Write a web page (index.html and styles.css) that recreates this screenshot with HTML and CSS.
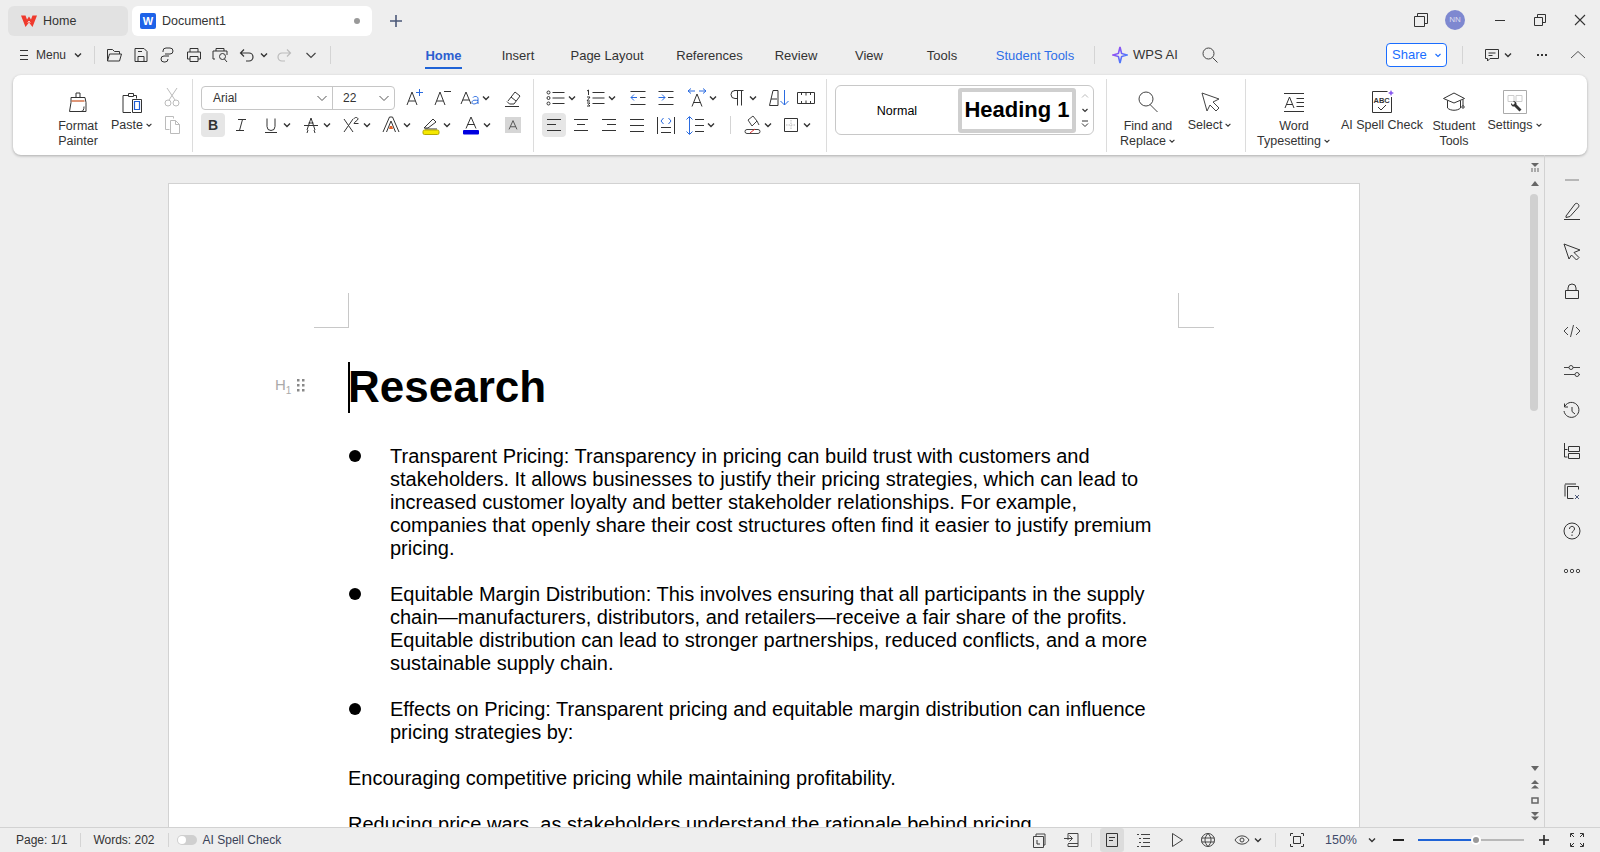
FILE: index.html
```html
<!DOCTYPE html>
<html lang="en">
<head>
<meta charset="utf-8">
<title>Document1</title>
<link rel="stylesheet" href="styles.css">
</head>
<body>
<svg class="defs" width="0" height="0" aria-hidden="true">
  <symbol id="chev" viewBox="0 0 10 10"><path d="M2 3.500 5 6.500 8 3.500" fill="none" stroke="#333" stroke-width="1.400"/></symbol>
  <symbol id="chevb" viewBox="0 0 10 10"><path d="M2.500 4 5 6.500 7.500 4" fill="none" stroke="#1a6dff" stroke-width="1.100"/></symbol>
  <symbol id="chevl" viewBox="0 0 12 12"><path d="M1.500 4 6 8.500 10.500 4" fill="none" stroke="#555" stroke-width="1"/></symbol>
</svg>
<div class="app">
  <header class="tabbar">
    <div class="tab tab-home">
      <svg class="logo" viewBox="0 0 16 14"><path d="M0 1.500h4.500l1.500 4 2-3 2 3 1.500-4H16L11.500 13 8 8.500 4.500 13z" fill="#ef3a2d"/><path d="M6.800 8.800 8 7l1.200 1.800" fill="none" stroke="#fff" stroke-width=".8"/></svg>
      <span>Home</span>
    </div>
    <div class="tab tab-doc">
      <span class="wicon">W</span>
      <span class="doc-name">Document1</span>
      <i class="dot"></i>
    </div>
    <svg class="plus" viewBox="0 0 14 14"><path d="M7 1v12M1 7h12" stroke="#4b5878" stroke-width="1.600"/></svg>
    <div class="win">
      <svg class="w1" viewBox="0 0 16 16"><path d="M1.500 4.500h10v10h-10zM4.500 4.500v-3h10v10h-3" fill="none" stroke="#333"/></svg>
      <span class="avatar">NN</span>
      <svg class="w2" viewBox="0 0 12 12"><path d="M1 6.500h10" stroke="#333"/></svg>
      <svg class="w3" viewBox="0 0 14 14"><path d="M1.500 4.500h8v8h-8zM4.500 4.500v-3h8v8h-3" fill="none" stroke="#333"/></svg>
      <svg class="w4" viewBox="0 0 12 12"><path d="M1 1l10 10M11 1 1 11" stroke="#333" stroke-width="1.100"/></svg>
    </div>
  </header>

  <nav class="toolbar">
    <div class="menu">
      <svg class="i16" viewBox="0 0 16 16"><path d="M4 3.500h8M4 8.500h8M4 12.500h8" stroke="#333"/></svg>
      <span>Menu</span>
      <svg class="ch ch-menu"><use href="#chev"/></svg>
    </div>
    <i class="vsep"></i>
    <div class="quick">
      <span class="q"><svg viewBox="0 0 18 18"><path d="M2.500 15V3.500h5l2 2h5v2.500M2.500 15l2-7h12l-2 7z" fill="none" stroke="#333"/></svg></span>
      <span class="q"><svg viewBox="0 0 18 18"><path d="M3 2.500h9l3 3v10H3zM6 15.500v-5h6v5M6 5.500h4" fill="none" stroke="#333"/></svg></span>
      <span class="q"><svg viewBox="0 0 18 18"><path d="M7 8h5a3 3 0 0 0 0-6H8a3 3 0 0 0-3 3v1M11 10H6a3 3 0 0 0 0 6h1a3 3 0 0 0 3-3" fill="none" stroke="#333"/></svg></span>
      <span class="q"><svg viewBox="0 0 18 18"><path d="M5 6V2.500h8V6M5 13H2.500V6h13v7H13M5 10.500h8v5H5z" fill="none" stroke="#333"/></svg></span>
      <span class="q"><svg viewBox="0 0 18 18"><path d="M5 5V2.500h8V5M4 13H2V5h14v4M8.500 10.500a3 3 0 1 0 6 0 3 3 0 1 0-6 0M13.500 13l2.500 3" fill="none" stroke="#333"/></svg></span>
      <span class="q q-c"><svg viewBox="0 0 18 18"><path d="M3 7h8a4 4 0 0 1 0 8H8M6 3.500 2.500 7 6 10.500" fill="none" stroke="#333" stroke-width="1.200"/></svg></span>
      <svg class="ch ch-q"><use href="#chev"/></svg>
      <span class="q"><svg viewBox="0 0 18 18"><path d="M15 7H7a4 4 0 0 0 0 8h3M12 3.500 15.500 7 12 10.500" fill="none" stroke="#bbb" stroke-width="1.200"/></svg></span>
      <span class="q"><svg class="ch-big" viewBox="0 0 12 12"><path d="M1.500 4 6 8.500 10.500 4" fill="none" stroke="#444" stroke-width="1.200"/></svg></span>
    </div>
    <i class="vsep vsep-q"></i>
    <div class="nav">
      <a class="navitem active"><span>Home</span></a>
      <a class="navitem"><span>Insert</span></a>
      <a class="navitem"><span>Page Layout</span></a>
      <a class="navitem"><span>References</span></a>
      <a class="navitem"><span>Review</span></a>
      <a class="navitem"><span>View</span></a>
      <a class="navitem"><span>Tools</span></a>
      <a class="navitem student"><span>Student Tools</span></a>
    </div>
    <i class="vsep vsep-n"></i>
    <div class="ai">
      <svg class="star" viewBox="0 0 16 18"><defs><linearGradient id="g" x1="0" y1="0" x2="1" y2="1"><stop offset="0" stop-color="#b03cf0"/><stop offset="1" stop-color="#2a8cff"/></linearGradient></defs><path d="M8 1 9.600 7.400 15 9 9.600 10.600 8 17 6.400 10.600 1 9 6.400 7.400z" fill="none" stroke="url(#g)" stroke-width="1.600"/></svg>
      <span>WPS AI</span>
    </div>
    <svg class="search" viewBox="0 0 18 18"><path d="M2 7.500a5.500 5.500 0 1 0 11 0 5.500 5.500 0 1 0-11 0M11.500 11.500 16.500 16.500" fill="none" stroke="#444"/></svg>
    <div class="rightbar">
      <div class="share"><span>Share</span><svg class="ch ch-share"><use href="#chevb"/></svg></div>
      <i class="vsep vsep-r"></i>
      <svg class="cm" viewBox="0 0 16 16"><path d="M1.500 2.500h13v9H6L3.500 14v-2.500h-2zM4.500 6h7M4.500 8.500h4" fill="none" stroke="#333"/></svg>
      <svg class="ch ch-cm"><use href="#chev"/></svg>
      <span class="dots"><i></i><i></i><i></i></span>
      <svg class="caret" viewBox="0 0 16 10"><path d="M1 8 8 1.500 15 8" fill="none" stroke="#555"/></svg>
    </div>
  </nav>

  <section class="ribbon">
    <div class="grp grp1">
      <div class="large lg-fp">
        <svg class="lgi" viewBox="0 0 24 24"><path d="M10 7V3h4v4M5 7.500h14l1 5v9H3.500l1.500-9z" fill="none" stroke="#333"/><path d="M5.500 11h13" stroke="#c8501e" stroke-width="1.200"/><path d="M15 21.500c2 0 3-2 3-5" fill="none" stroke="#333"/></svg>
        <span class="lbl">Format<br>Painter</span>
      </div>
      <div class="large lg-paste">
        <svg class="lgi" viewBox="0 0 24 24"><path d="M8.500 5.500H3v17h8M13.500 5.500h3v3M8.500 6.500V3.500h5v3z" fill="none" stroke="#333"/><path d="M12.500 9.500h9v13h-9z" fill="none" stroke="#333"/><path d="M14.500 11.500h5v8h-5z" fill="none" stroke="#1f5fd6" stroke-width="1.200"/></svg>
        <span class="lbl lbl1">Paste<svg class="ch ch-lbl"><use href="#chev"/></svg></span>
      </div>
      <div class="cutcopy">
        <svg class="b" viewBox="0 0 24 24"><path d="M7 3l8 12M17 3 9 15M5 18a3 3 0 1 0 6 0 3 3 0 1 0-6 0M13 18a3 3 0 1 0 6 0 3 3 0 1 0-6 0" fill="none" stroke="#bbb"/></svg>
        <svg class="b" viewBox="0 0 24 24"><path d="M5.500 3.500h8v2M5.500 3.500v13h4M10.500 7.500h5l4 4v9h-9zM15.500 7.500v4h4" fill="none" stroke="#bbb"/></svg>
      </div>
    </div>

    <div class="grp grp2">
      <div class="row row-top">
        <div class="fontbox"><span class="fname">Arial<svg class="chl"><use href="#chevl"/></svg></span><span class="fsize">22<svg class="chl"><use href="#chevl"/></svg></span></div>
        <svg class="b ml7" viewBox="0 0 24 24"><path d="M5 19 10 6l5 13M6.800 15h6.400" fill="none" stroke="#333"/><path d="M14 6.500h7M17.500 3v7" stroke="#2a6be0"/></svg>
        <svg class="b ml4" viewBox="0 0 24 24"><path d="M5 19 10 6l5 13M6.800 15h6.400" fill="none" stroke="#333"/><path d="M14 5.500h7" stroke="#333"/></svg>
        <span class="bc ml4"><svg class="b" viewBox="0 0 24 24"><path d="M3 18 8 6l5 12M4.700 14h6.600" fill="none" stroke="#333"/><path d="M15 11.500c1-1.500 5-1.500 5 1V18M20 14.500c-5-1-6 .5-6 2s3 2.500 6-.5" fill="none" stroke="#2a6be0"/></svg><svg class="ch"><use href="#chev"/></svg></span>
        <svg class="b ml2" viewBox="0 0 24 24"><path d="M8 15 15 6l5 4-6 8H9.500L7 15.500M5 20.500h14" fill="none" stroke="#333"/><path d="M11 11l5 4" stroke="#333"/></svg>
      </div>
      <div class="row">
        <span class="b act txt-b">B</span>
        <svg class="b ml4" viewBox="0 0 24 24"><path d="M9 6.500h8M7 17.500h8M13.500 6.500l-3 11" fill="none" stroke="#333"/></svg>
        <span class="bc ml6"><svg class="b" viewBox="0 0 24 24"><path d="M8 5.500v8a4 4 0 0 0 8 0v-8M6 19.500h12" fill="none" stroke="#333"/></svg><svg class="ch"><use href="#chev"/></svg></span>
        <span class="bc"><svg class="b" viewBox="0 0 24 24"><path d="M8 17l4-12 4 12M9.500 10h5M5 12.500h14M8 20l1-3M16 20l-1-3" fill="none" stroke="#333"/></svg><svg class="ch"><use href="#chev"/></svg></span>
        <span class="bc"><svg class="b" viewBox="0 0 24 24"><path d="M5 6l9 13M14 6 5 19" fill="none" stroke="#333"/><path d="M15 6c0-2 4-2 4 0 0 1.500-4 3-4 4.500h4.500" fill="none" stroke="#333"/></svg><svg class="ch"><use href="#chev"/></svg></span>
        <span class="bc"><svg class="b" viewBox="0 0 24 24"><path d="M4 19 10.500 4h3L20 19M7.500 19l4.500-11 4.500 11" fill="none" stroke="#333"/><path d="M10 16h4l-.8-3h-2.400z" fill="#e2622a"/></svg><svg class="ch"><use href="#chev"/></svg></span>
        <span class="bc"><svg class="b" viewBox="0 0 24 24"><path d="M5 15 14 6l3 3-8 6zM6 16h12" fill="none" stroke="#333"/><rect x="4" y="17" width="16" height="4.500" rx="1.500" fill="#f5e800" stroke="#b5a800"/></svg><svg class="ch"><use href="#chev"/></svg></span>
        <span class="bc"><svg class="b" viewBox="0 0 24 24"><path d="M7 15.500 12 4l5 11.500M8.500 11.500h7" fill="none" stroke="#333"/><rect x="4" y="17" width="16" height="4.500" rx="1" fill="#0000e0"/></svg><svg class="ch"><use href="#chev"/></svg></span>
        <span class="b ml2 shade"><svg viewBox="0 0 16 16"><path d="M3.500 13 8 3l4.500 10M5 10h6" fill="none" stroke="#444"/></svg></span>
      </div>
    </div>

    <div class="grp grp3">
      <div class="row row-top para1">
        <span class="bc"><svg class="b" viewBox="0 0 24 24"><path d="M8.500 6.500h12M8.500 12h12M8.500 17.500h12" stroke="#333"/><g fill="none" stroke="#333"><circle cx="4.500" cy="6.500" r="1.500"/><circle cx="4.500" cy="12" r="1.500"/><circle cx="4.500" cy="17.500" r="1.500"/></g></svg><svg class="ch"><use href="#chev"/></svg></span>
        <span class="bc"><svg class="b" viewBox="0 0 24 24"><path d="M8.500 6.500h12M8.500 12h12M8.500 17.500h12M3 5l1.500-1v5M3 11h3l-3 4h3M3 17h3l-1.500 1.500L6 20H3" fill="none" stroke="#333"/></svg><svg class="ch"><use href="#chev"/></svg></span>
        <svg class="b ml2" viewBox="0 0 24 24"><path d="M4.500 5.500h15M14 11.500h5.500M4.500 18.500h15" stroke="#333"/><path d="M11 11.500H5M8 8.500l-3 3 3 3" fill="none" stroke="#2a6be0"/></svg>
        <svg class="b ml4" viewBox="0 0 24 24"><path d="M4.500 5.500h15M14 11.500h5.500M4.500 18.500h15" stroke="#333"/><path d="M4.500 11.500H11M8 8.500l3 3-3 3" fill="none" stroke="#2a6be0"/></svg>
        <span class="bc ml7"><svg class="b" viewBox="0 0 24 24"><path d="M7 20.500 12 8l5 12.500M8.500 16.500h7" fill="none" stroke="#333"/><path d="M3 5h7M6 2.500 3 5l3 2.500M14 5h7M18 2.500 21 5l-3 2.500" fill="none" stroke="#2a6be0"/></svg><svg class="ch"><use href="#chev"/></svg></span>
        <span class="bc"><svg class="b" viewBox="0 0 24 24"><path d="M12.500 4.500v15M16.500 4.500v15M12.500 4.500H10a4 4 0 0 0 0 8h2.500M9 4.500h9.500" fill="none" stroke="#333"/></svg><svg class="ch"><use href="#chev"/></svg></span>
        <svg class="b ml2" viewBox="0 0 24 24"><path d="M2.500 19.500 6 4.500h5v15zM4 13h6" fill="none" stroke="#333"/><path d="M17.500 4v15M13.500 15l4 4 4-4" fill="none" stroke="#2a6be0"/></svg>
        <svg class="b ml3" viewBox="0 0 24 24"><path d="M3.500 6.500h17v11h-17zM7.500 6.500v2.500M12 6.500v3M16.500 6.500v2.500M7.500 17.500V15M12 17.500V14.500M16.500 17.500V15" fill="none" stroke="#333"/></svg>
      </div>
      <div class="row para2">
        <svg class="b act" viewBox="0 0 24 24"><path d="M5 6.500h14M5 11.500h9M5 17.500h14" stroke="#333"/></svg>
        <svg class="b ml3" viewBox="0 0 24 24"><path d="M5 6.500h14M8 11.500h8M5 17.500h14" stroke="#333"/></svg>
        <svg class="b ml4" viewBox="0 0 24 24"><path d="M5 6.500h14M10 11.500h9M5 17.500h14" stroke="#333"/></svg>
        <svg class="b ml4" viewBox="0 0 24 24"><path d="M5 6.500h14M5 12.500h14M5 18.500h14" stroke="#333"/></svg>
        <svg class="b ml5" viewBox="0 0 24 24"><path d="M3.500 4v17M20.500 4v17M7 14.500h10M7 19.500h10" stroke="#333"/><path d="M9.500 5 7 8l2.500 3M14.500 5 17 8l-2.500 3" fill="none" stroke="#2a6be0"/></svg>
        <span class="bc ml5"><svg class="b" viewBox="0 0 24 24"><path d="M12 6.500h9M12 12.500h9M12 18.500h9" stroke="#333"/><path d="M6.500 4v17M3.500 6.500l3-3 3 3M3.500 18.500l3 3 3-3" fill="none" stroke="#2a6be0"/></svg><svg class="ch"><use href="#chev"/></svg></span>
        <i class="vsep vsep-p"></i>
        <span class="bc ml9"><svg class="b" viewBox="0 0 24 24"><path d="M8 7 13 3l4 5-5 5zM17 8l2 4M5 18.500a2 2 0 0 1 2-2h11a2 2 0 0 1 0 4H7a2 2 0 0 1-2-2z" fill="none" stroke="#444"/><path d="M10 20l5-4" stroke="#e03030"/></svg><svg class="ch"><use href="#chev"/></svg></span>
        <span class="bc ml-1"><svg class="b" viewBox="0 0 24 24"><path d="M5.500 5.500h13v13h-13z" fill="none" stroke="#333"/><path d="M12 7v10M7 12h10" stroke="#bbb" stroke-dasharray="1.500 1"/></svg><svg class="ch"><use href="#chev"/></svg></span>
      </div>
    </div>

    <div class="grp grp4">
      <div class="styles">
        <span class="st-normal">Normal</span>
        <span class="st-head">Heading 1</span>
        <span class="st-arrows">
          <svg viewBox="0 0 10 10"><path d="M2 6.500 5 3.500 8 6.500" fill="none" stroke="#bbb"/></svg>
          <svg viewBox="0 0 10 10"><path d="M2.500 4 5 6.500 7.500 4" fill="none" stroke="#333" stroke-width="1.200"/></svg>
          <svg viewBox="0 0 10 10"><path d="M2 2h6M2 4.500 5 7.500 8 4.500" fill="none" stroke="#333"/></svg>
        </span>
      </div>
    </div>

    <div class="grp grp5">
      <div class="large lg-find">
        <svg class="lgi" viewBox="0 0 24 24"><path d="M3 9a7 7 0 1 0 14 0 7 7 0 1 0-14 0M14 14.500 21.500 22" fill="none" stroke="#444"/></svg>
        <span class="lbl">Find and<br>Replace<svg class="ch ch-lbl"><use href="#chev"/></svg></span>
      </div>
      <div class="large lg-sel">
        <svg class="lgi" viewBox="0 0 24 24"><path d="M4 3l17 6-6 3 6 6-3 3-6-6-3 6z" fill="none" stroke="#444"/></svg>
        <span class="lbl lbl1">Select<svg class="ch ch-lbl"><use href="#chev"/></svg></span>
      </div>
    </div>

    <div class="grp grp6">
      <div class="large lg-word">
        <svg class="lgi" viewBox="0 0 24 24"><path d="M2 3.500h20M2 21.500h20M14.500 8.500H22M14.500 12.500H22M14.500 16.500H22" stroke="#333"/><path d="M3 18 7.500 7 12 18M4.500 14.500h6" fill="none" stroke="#333"/></svg>
        <span class="lbl">Word<br>Typesetting<svg class="ch ch-lbl"><use href="#chev"/></svg></span>
      </div>
      <div class="large lg-spell">
        <svg class="lgi" viewBox="0 0 24 24"><path d="M17.500 1.500h-15v21h19V7" fill="none" stroke="#333"/><path d="M8 19l3 3 5-5" fill="none" stroke="#333" transform="translate(0 -2)"/><text x="3.500" y="13" class="abc">ABC</text><path d="M21 0l1 2 2 1-2 1-1 2-1-2-2-1 2-1z" fill="#8a5cf0"/></svg>
        <span class="lbl lbl1">AI Spell Check</span>
      </div>
      <div class="large lg-student">
        <svg class="lgi" viewBox="0 0 24 24"><path d="M12 3 1.500 8.500 12 13l10.500-4.500zM5.500 10.500V18c3 3 10 3 13 0v-7.500M21 9.500V16" fill="none" stroke="#333"/><circle cx="21" cy="17" r="1.200" fill="none" stroke="#333"/></svg>
        <span class="lbl">Student<br>Tools</span>
      </div>
      <div class="large lg-set">
        <svg class="lgi" viewBox="0 0 24 24"><path d="M.5.500h23v23H.5z" fill="none" stroke="#aaa"/><path d="M5 5.500h6v6H5zM13 5.500h6v6h-6z" fill="none" stroke="#ccc"/><path d="M8 13a3 3 0 0 0 3.500 3.500l5 5 2-2-5-5A3 3 0 0 0 10 11l2 2-2 2z" fill="#333"/></svg>
        <span class="lbl lbl1">Settings<svg class="ch ch-lbl"><use href="#chev"/></svg></span>
      </div>
    </div>
  </section>

  <main class="main">
    <div class="docarea">
      <article class="page">
        <div class="marks"><i class="mark-l"></i><i class="mark-r"></i></div>
        <div class="content">
          <h1 class="h1"><span class="gutter"><span class="h1tag">H<sub>1</sub></span><svg class="grip" viewBox="0 0 10 14"><g fill="#888"><rect x="1" y="1" width="2.500" height="2.500"/><rect x="6" y="1" width="2.500" height="2.500"/><rect x="1" y="6" width="2.500" height="2.500"/><rect x="6" y="6" width="2.500" height="2.500"/><rect x="1" y="11" width="2.500" height="2.500"/><rect x="6" y="11" width="2.500" height="2.500"/></g></svg></span><i class="cursor"></i>Research</h1>
          <ul class="list">
            <li>Transparent Pricing: Transparency in pricing can build trust with customers and stakeholders. It allows businesses to justify their pricing strategies, which can lead to increased customer loyalty and better stakeholder relationships. For example, companies that openly share their cost structures often find it easier to justify premium pricing.</li>
            <li>Equitable Margin Distribution: This involves ensuring that all participants in the supply chain—manufacturers, distributors, and retailers—receive a fair share of the profits. Equitable distribution can lead to stronger partnerships, reduced conflicts, and a more sustainable supply chain.</li>
            <li>Effects on Pricing: Transparent pricing and equitable margin distribution can influence pricing strategies by:</li>
          </ul>
          <p class="para">Encouraging competitive pricing while maintaining profitability.</p>
          <p class="para">Reducing price wars, as stakeholders understand the rationale behind pricing.</p>
        </div>
      </article>
    </div>
    <div class="vscroll">
      <div class="sb-top">
        <svg viewBox="0 0 10 10"><path d="M1 1h8L5 5z" fill="#666"/><path d="M1 7h8M1 9h8" stroke="#666" stroke-dasharray="2 1"/></svg>
        <svg viewBox="0 0 10 10"><path d="M1 8h8L5 3z" fill="#666"/></svg>
      </div>
      <div class="sb-track"><div class="sb-thumb"></div></div>
      <div class="sb-bot">
        <svg viewBox="0 0 10 10"><path d="M1 3h8L5 8z" fill="#666"/></svg>
        <svg viewBox="0 0 10 10"><path d="M1 5h8L5 1zM1 9.500h8L5 6z" fill="#666"/></svg>
        <svg viewBox="0 0 10 10"><path d="M2 3h6v5H2z" fill="none" stroke="#666" stroke-width="1.500"/></svg>
        <svg viewBox="0 0 10 10"><path d="M1 1h8L5 5zM1 5.500h8L5 9.500z" fill="#666"/></svg>
      </div>
    </div>
    <aside class="rail">
      <svg class="r r0" viewBox="0 0 20 4"><path d="M3 2h14" stroke="#999" stroke-width="1.300"/></svg>
      <svg class="r" viewBox="0 0 20 20"><path d="M2 18.500h16M4 15 13 3c2-2 5 1 3.500 3L8 15.500l-4 1z" fill="none" stroke="#333"/></svg>
      <svg class="r" viewBox="0 0 20 20"><path d="M2 3l16 6-6 2.500 5 5-2.500 2.500-5-5L7 18z" fill="none" stroke="#333"/></svg>
      <svg class="r" viewBox="0 0 20 20"><path d="M3.500 9.500h13v8h-13zM6 9.500V7a4 4 0 0 1 8 0v2.500" fill="none" stroke="#333"/></svg>
      <svg class="r" viewBox="0 0 20 20"><path d="M6 6 2 10l4 4M14 6l4 4-4 4M11.500 4 8.500 16" fill="none" stroke="#444"/></svg>
      <svg class="r" viewBox="0 0 20 20"><path d="M2 6.500h5M11 6.500h7M2 13.500h11M17 13.500h1M7 6.500a2 2 0 1 0 4 0 2 2 0 1 0-4 0M13 13.500a2 2 0 1 0 4 0 2 2 0 1 0-4 0" fill="none" stroke="#444"/></svg>
      <svg class="r" viewBox="0 0 20 20"><path d="M3 5a7.500 7.500 0 1 1-1 5M2.500 2.500V6H6M10 6v4.500l3 2.500" fill="none" stroke="#333"/></svg>
      <svg class="r" viewBox="0 0 20 20"><path d="M2.500 2v14h3M2.500 8.500h3M6.500 5.500h11v5h-11zM6.500 12.500h11v5h-11z" fill="none" stroke="#333"/></svg>
      <svg class="r" viewBox="0 0 20 20"><path d="M5.500 5.500h11v3M5.500 5.500v12h6M3 3.500v12M3 3h11" fill="none" stroke="#333"/><path d="M13 14l4 4M17 14l-4 4" stroke="#4b5878"/></svg>
      <svg class="r" viewBox="0 0 20 20"><circle cx="10" cy="10" r="8" fill="none" stroke="#333"/><path d="M7.500 8c0-3.500 5-3.500 5 0 0 2-2.500 2-2.500 4" fill="none" stroke="#333"/><path d="M10 13.500v1.500" stroke="#333"/></svg>
      <svg class="r" viewBox="0 0 20 6"><g fill="none" stroke="#444"><circle cx="4" cy="3" r="1.700"/><circle cx="10" cy="3" r="1.700"/><circle cx="16" cy="3" r="1.700"/></g></svg>
    </aside>
  </main>

  <footer class="status">
    <span class="s-page">Page: 1/1</span>
    <i class="ssep"></i>
    <span class="s-words">Words: 202</span>
    <i class="ssep"></i>
    <span class="toggle"></span>
    <span class="s-spell">AI Spell Check</span>
    <div class="s-right">
      <svg class="s16" viewBox="0 0 16 16"><path d="M2.500 4.500h10v11h-10zM5 4.500v-2.500h9v11h-1.500" fill="none" stroke="#444"/><path d="M6 8v4h3" fill="none" stroke="#333"/></svg>
      <svg class="s16 sg" viewBox="0 0 16 16"><path d="M4 8V1.500h10v13H4v-2.500M4 11.500h10M0 6.500h8M5.500 3.500l3 3-3 3" fill="none" stroke="#444"/></svg>
      <i class="ssep sep-a"></i>
      <span class="viewact"><svg class="s16" viewBox="0 0 16 16"><path d="M2.500 1.500h11v13h-11zM5 5.500h6M5 8.500h4" fill="none" stroke="#333"/></svg></span>
      <svg class="s16 sg2" viewBox="0 0 16 16"><path d="M2 2.500h2M6 2.500h9M4 6.500h2M8 6.500h7M4 10.500h2M8 10.500h7M2 14.500h2M6 14.500h9" stroke="#444"/></svg>
      <svg class="s16 sg3" viewBox="0 0 16 16"><path d="M3.500 1.500v13l10-6.500z" fill="none" stroke="#444"/></svg>
      <svg class="s16 sg4" viewBox="0 0 16 16"><circle cx="8" cy="8" r="6.500" fill="none" stroke="#444"/><path d="M1.500 6h13M1.500 10h13" stroke="#444"/><path d="M8 1.500c-4 4-4 9 0 13M8 1.500c4 4 4 9 0 13" fill="none" stroke="#444"/></svg>
      <svg class="s16 sg5" viewBox="0 0 16 16"><path d="M1 8c3-5.500 11-5.500 14 0-3 5.500-11 5.500-14 0z" fill="none" stroke="#444"/><circle cx="8" cy="8" r="2" fill="none" stroke="#444"/></svg>
      <svg class="ch ch-eye"><use href="#chev"/></svg>
      <i class="ssep sep-b"></i>
      <svg class="s16 sg6" viewBox="0 0 16 16"><path d="M1.500 4V1.500H4M12 1.500h2.500V4M14.500 12v2.500H12M4 14.500H1.500V12" fill="none" stroke="#333"/><path d="M4.500 4.500h7v7h-7z" fill="none" stroke="#333"/></svg>
      <span class="zoomval">150%</span>
      <svg class="ch ch-z"><use href="#chev"/></svg>
      <span class="zminus"></span>
      <div class="slider"><div class="slider-fill"></div><i class="thumb"></i></div>
      <svg class="zplus" viewBox="0 0 12 12"><path d="M6 1v10M1 6h10" stroke="#222" stroke-width="1.600"/></svg>
      <svg class="s16 sg7" viewBox="0 0 16 16"><path d="M1.500 5V1.500H5M11 1.500h3.500V5M14.500 11v3.500H11M5 14.500H1.500V11M2 2l3 3M14 2l-3 3M14 14l-3-3M2 14l3-3" fill="none" stroke="#333"/></svg>
    </div>
  </footer>
</div>
</body>
</html>
```

FILE: styles.css
```css
* { box-sizing: border-box; }
html, body { margin: 0; padding: 0; height: 100%; overflow: hidden; }
body { font-family: "Liberation Sans", Arial, sans-serif; font-size: 12px; color: #333; background: #eeeeee; }
.defs { position: absolute; }
svg { display: block; flex: none; }
.app { width: 1600px; height: 852px; display: flex; flex-direction: column; overflow: hidden; }

/* tab bar */
.tabbar { height: 40px; flex: none; display: flex; align-items: flex-start; padding: 6px 0 0 8px; }
.tab { height: 30px; display: flex; align-items: center; border-radius: 6px; font-size: 12.500px; }
.tab-home { width: 120px; background: #e2e2e2; padding-left: 13px; gap: 6px; }
.logo { width: 16px; height: 14px; }
.tab-doc { width: 240px; margin-left: 4px; background: #fff; padding: 0 9px 0 8px; gap: 6px; }
.wicon { width: 16px; height: 16px; background: #1d62e8; border-radius: 2px; color: #fff; font-weight: 700; font-size: 11px; line-height: 16px; text-align: center; }
.doc-name { flex: 1; }
.dot { width: 6px; height: 6px; border-radius: 50%; background: #999; margin-right: 3px; }
.plus { width: 14px; height: 14px; margin: 8px 0 0 17px; }
.win { margin-left: auto; display: flex; align-items: center; height: 28px; }
.w1 { width: 16px; height: 16px; margin-right: 16px; }
.avatar { width: 20px; height: 20px; border-radius: 50%; background: #7e88d0; color: #dde; font-size: 8px; text-align: center; line-height: 20px; }
.w2 { width: 12px; height: 12px; margin-left: 29px; }
.w3 { width: 14px; height: 14px; margin-left: 27px; }
.w4 { width: 12px; height: 12px; margin: 0 14px 0 27px; }

/* toolbar */
.toolbar { height: 35px; flex: none; display: flex; align-items: center; font-size: 13px; padding-bottom: 6px; }
.menu { width: 90px; display: flex; align-items: center; padding-left: 16px; font-size: 12px; }
.menu span { margin-left: 4px; }
.i16 { width: 16px; height: 16px; }
.ch { width: 10px; height: 10px; }
.ch-menu { margin-left: 7px; }
.vsep { width: 1px; height: 18px; background: #d4d4d4; flex: none; margin-left: 4px; }
.quick { display: flex; align-items: center; margin-left: 6px; }
.q { width: 26.500px; height: 24px; display: flex; align-items: center; justify-content: center; }
.q svg { width: 18px; height: 18px; }
.q .ch-big { width: 12px; height: 12px; }
.ch-q { margin: 0 2px 0 -1px; width: 10px; }
.vsep-q { margin-left: 6px; }
.nav { display: grid; grid-template-columns: 73px 76px 102px 103px 70px 76px 70px 116px; margin-left: 76px; height: 29px; align-items: start; justify-items: center; }
.navitem { height: 29px; display: block; padding-top: 8px; white-space: nowrap; line-height: 15px; }
.navitem span { display: block; padding-bottom: 4px; }
.navitem.active { color: #2c5fd0; font-weight: 700; }
.navitem.active span { border-bottom: 2px solid #1f63d6; }
.navitem.student { color: #2f6fe8; }
.vsep-n { margin-left: 1px; }
.ai { display: flex; align-items: center; margin-left: 17px; gap: 5px; }
.star { width: 16px; height: 18px; }
.search { width: 18px; height: 18px; margin-left: 23px; }
.rightbar { margin-left: auto; display: flex; align-items: center; }
.share { width: 61px; height: 24px; border: 1px solid #1a6dff; border-radius: 4px; color: #1a6dff; display: flex; align-items: center; padding-left: 5px; background: #fff; font-size: 13px; }
.ch-share { margin-left: 6px; }
.vsep-r { margin-left: 15px; }
.cm { width: 16px; height: 16px; margin-left: 21px; }
.ch-cm { margin-left: 3px; }
.dots { display: flex; gap: 2px; margin-left: 24px; }
.dots i { width: 2px; height: 2px; background: #333; }
.caret { width: 16px; height: 10px; margin: 0 14px 0 23px; }

/* ribbon */
.ribbon { height: 80px; flex: none; margin: 0 13px; background: #fff; border-radius: 8px; box-shadow: 0 1px 3px rgba(0,0,0,.28); display: flex; padding: 4px 0 3px; }
.grp { height: 73px; border-right: 1px solid #dcdcdc; flex: none; }
.grp1 { width: 180px; display: flex; padding-left: 41px; }
.grp2 { width: 341px; padding: 7px 0 0 8px; }
.grp3 { width: 293px; padding: 7px 0 0 8px; }
.grp4 { width: 280px; padding: 6px 0 0 8px; }
.grp5 { width: 139px; display: flex; padding-left: 11px; }
.grp6 { border-right: 0; flex: 1; display: flex; padding-left: 15px; }
.large { display: flex; flex-direction: column; align-items: center; flex: none; padding-top: 11px; }
.lgi { width: 24px; height: 24px; margin-bottom: 5px; }
.lbl { display: block; text-align: center; line-height: 15px; font-size: 12.500px; white-space: nowrap; }
.lbl1 { margin-top: -1px; }
.ch-lbl { display: inline-block; width: 8px; height: 8px; margin-left: 2px; vertical-align: 0; }
.lg-fp { width: 48px; }
.lg-paste { width: 50px; margin-left: 5px; }
.cutcopy { display: flex; flex-direction: column; gap: 4px; padding-top: 6px; margin-left: 3px; }
.b { width: 24px; height: 24px; flex: none; }
.row { display: flex; height: 24px; align-items: center; margin-bottom: 3px; }
.bc { display: flex; align-items: center; width: 40px; flex: none; }
.bc .ch { margin-left: -1px; }
.act { background: #e6e6e6; border-radius: 4px; }
.txt-b { font-weight: 700; font-size: 14px; text-align: center; line-height: 24px; }
.ml2 { margin-left: 2px; } .ml3 { margin-left: 3px; } .ml4 { margin-left: 4px; } .ml5 { margin-left: 5px; } .ml6 { margin-left: 6px; } .ml7 { margin-left: 7px; } .ml9 { margin-left: 9px; } .ml-1 { margin-left: -1px; }
.shade { background: #d6d6d6; display: flex; align-items: center; justify-content: center; width: 16px; height: 16px; margin: 0 6px 0 6px; }
.shade svg { width: 14px; height: 14px; }
.fontbox { display: flex; width: 194px; height: 24px; border: 1px solid #c6c6c6; border-radius: 4px; }
.fname { width: 131px; border-right: 1px solid #c6c6c6; display: flex; align-items: center; justify-content: space-between; padding: 0 4px 0 11px; }
.fsize { flex: 1; display: flex; align-items: center; justify-content: space-between; padding: 0 4px 0 10px; }
.chl { width: 12px; height: 12px; }
.para1 { padding-left: 2px; }
.vsep-p { height: 18px; margin-left: 7px; margin-right: 0; }
.styles { width: 259px; height: 50px; border: 1px solid #c8c8c8; border-radius: 6px; display: flex; align-items: center; }
.st-normal { width: 122px; text-align: center; color: #000; font-size: 12.500px; padding-top: 1px; }
.st-head { width: 118px; height: 45px; border: 4px solid #cfcfcf; border-radius: 3px; font-weight: 700; font-size: 22px; color: #000; line-height: 36px; text-align: center; white-space: nowrap; }
.st-arrows { display: flex; flex-direction: column; gap: 4px; margin-left: 4px; }
.st-arrows svg { width: 10px; height: 10px; }
.lg-find { width: 60px; }
.lg-sel { width: 60px; margin-left: 2px; }
.lg-word { width: 66px; }
.lg-spell { width: 84px; margin-left: 13px; }
.lg-student { width: 52px; margin-left: 4px; }
.lg-set { width: 60px; margin-left: 5px; }
.abc { font-size: 7.500px; font-family: "Liberation Sans", sans-serif; font-weight: 700; fill: #333; }

/* main */
.main { flex: 1; display: flex; min-height: 0; }
.docarea { width: 1525px; padding: 28px 0 0 168px; overflow: hidden; flex: none; }
.page { width: 1192px; height: 1600px; background: #fff; border: 1px solid #d2d2d2; padding-top: 109px; color: #000; }
.marks { width: 900px; height: 35px; margin-left: 145px; display: flex; justify-content: space-between; }
.mark-l { width: 35px; border-right: 1px solid #c8c8c8; border-bottom: 1px solid #c8c8c8; }
.mark-r { width: 36px; border-left: 1px solid #c8c8c8; border-bottom: 1px solid #c8c8c8; }
.content { padding: 34px 0 0 179px; width: 1010px; font-size: 20px; line-height: 23px; }
.h1 { position: relative; margin: 0 0 33px; font-size: 44px; line-height: 50px; font-weight: 700; }
.cursor { position: absolute; left: 0; top: 0; width: 2px; height: 51px; background: #000; }
.gutter { position: absolute; left: -73px; top: 14px; display: flex; align-items: center; gap: 5px; font-weight: 400; }
.h1tag { font-size: 15px; line-height: 18px; color: #aaa; }
.h1tag sub { font-size: 10px; line-height: 0; }
.grip { width: 10px; height: 14px; }
.list { list-style: none; margin: 0; padding: 0; }
.list li { position: relative; padding-left: 42px; margin-bottom: 23px; }
.list li::before { content: ""; position: absolute; left: 1px; top: 5px; width: 12px; height: 12px; border-radius: 50%; background: #000; }
.para { margin: 0 0 23px; }

.vscroll { width: 19px; flex: none; display: flex; flex-direction: column; align-items: center; padding: 7px 0 6px; }
.vscroll svg { width: 10px; height: 10px; }
.sb-top { display: flex; flex-direction: column; gap: 6px; }
.sb-track { flex: 1; width: 100%; padding: 6px 5px 0; }
.sb-thumb { width: 8px; height: 217px; background: #d0d0d0; border-radius: 4px; }
.sb-bot { display: flex; flex-direction: column; gap: 6px; }
.rail { flex: 1; border-left: 1px solid #d2d2d2; display: flex; flex-direction: column; align-items: center; padding: 23px 1px 0 0; gap: 20px; }
.r { width: 20px; height: 20px; }
.r0 { height: 4px; margin-bottom: -1px; }
.rail .r:last-child { height: 6px; margin-top: 7px; }

/* status */
.status { height: 25px; flex: none; border-top: 1px solid #d2d2d2; display: flex; align-items: center; padding-left: 16px; background: #eeeeee; font-size: 12px; }
.ssep { width: 1px; height: 14px; background: #d4d4d4; flex: none; margin-left: 13px; }
.s-words { margin-left: 12px; }
.toggle { width: 20px; height: 10px; border-radius: 5px; background: #cfcfcf; margin-left: 8px; position: relative; }
.toggle::before { content: ""; position: absolute; left: 1px; top: 1px; width: 8px; height: 8px; border-radius: 50%; background: #fff; }
.s-spell { margin-left: 6px; color: #3a4258; }
.s-right { margin-left: auto; display: flex; align-items: center; }
.s16 { width: 16px; height: 16px; }
.sg { margin-left: 17px; }
.sep-a { margin-left: 11px; }
.viewact { width: 24px; height: 24px; background: #dcdcdc; border-radius: 3px; margin-left: 8px; display: flex; align-items: center; justify-content: center; }
.sg2 { margin-left: 11px; }
.sg3 { margin-left: 18px; }
.sg4 { margin-left: 15px; }
.sg5 { margin-left: 18px; }
.ch-eye { margin-left: 3px; }
.sep-b { margin-left: 12px; }
.sg6 { margin-left: 13px; }
.zoomval { margin-left: 20px; color: #3f4a6a; font-size: 12.500px; }
.ch-z { margin-left: 10px; }
.zminus { width: 11px; height: 2px; background: #222; margin-left: 16px; }
.slider { width: 106px; height: 2px; background: #b8b8b8; margin-left: 14px; position: relative; }
.slider-fill { width: 54px; height: 2px; background: #1f63d6; }
.thumb { position: absolute; left: 53px; top: -4px; width: 10px; height: 10px; border-radius: 50%; background: #999; border: 2px solid #fff; }
.zplus { width: 12px; height: 12px; margin-left: 14px; }
.sg7 { margin: 0 15px 0 19px; }
```
